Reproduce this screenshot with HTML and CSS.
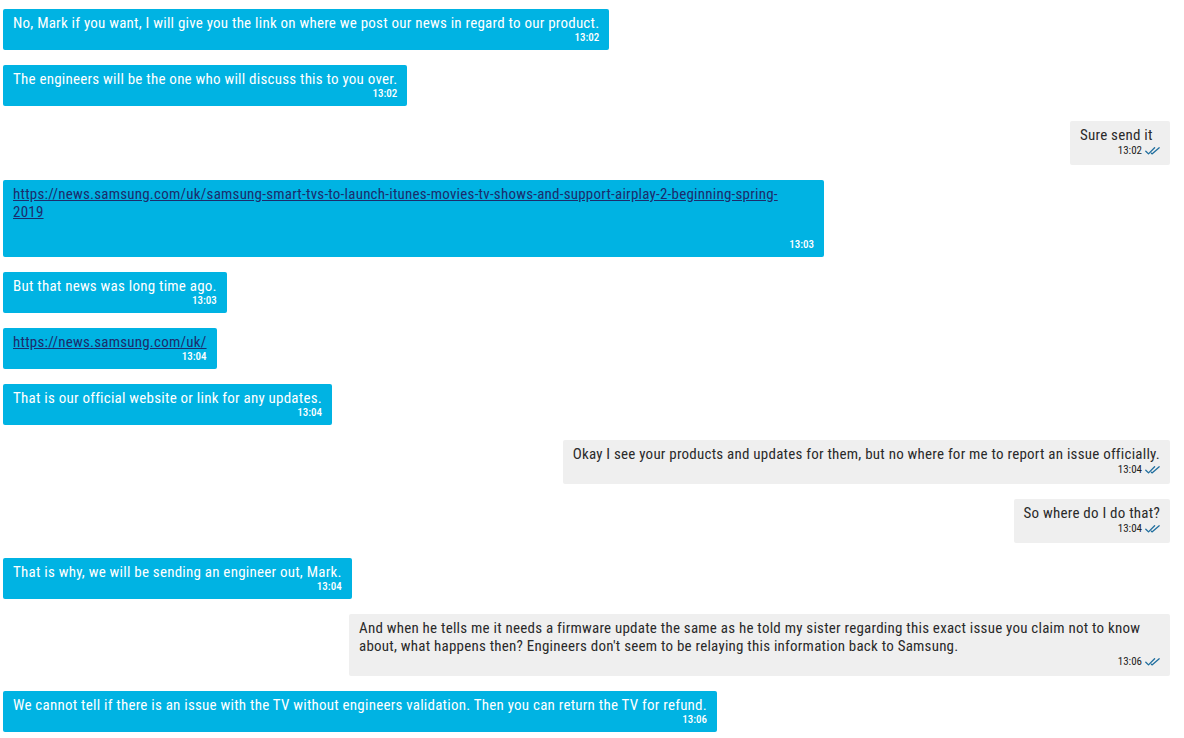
FILE: index.html
```html
<!DOCTYPE html>
<html lang="en">
<head>
<meta charset="utf-8">
<title>Chat transcript</title>
<link rel="stylesheet" href="styles.css">
</head>
<body>
<div class="chat">

  <div class="msg agent">
    <div class="bubble">
      <div class="text">No, Mark if you want, I will give you the link on where we post our news in regard to our product.</div>
      <div class="meta"><span class="time">13:02</span></div>
    </div>
  </div>

  <div class="msg agent">
    <div class="bubble">
      <div class="text">The engineers will be the one who will discuss this to you over.</div>
      <div class="meta"><span class="time">13:02</span></div>
    </div>
  </div>

  <div class="msg user">
    <div class="bubble">
      <div class="text">Sure send it</div>
      <div class="meta"><span class="time">13:02</span><svg class="ticks" viewBox="0 0 15 8" width="15" height="8"><path d="M0.8 4.2 L3.5 6.9 L9.6 0.8 M6.4 6.3 L7 6.9 L14.2 0.8"/></svg></div>
    </div>
  </div>

  <div class="msg agent">
    <div class="bubble full">
      <div class="text"><a class="link" href="#">https://news.samsung.com/uk/samsung-smart-tvs-to-launch-itunes-movies-tv-shows-and-support-airplay-2-beginning-spring-<br>2019</a><br>&nbsp;</div>
      <div class="meta"><span class="time">13:03</span></div>
    </div>
  </div>

  <div class="msg agent">
    <div class="bubble">
      <div class="text">But that news was long time ago.</div>
      <div class="meta"><span class="time">13:03</span></div>
    </div>
  </div>

  <div class="msg agent">
    <div class="bubble">
      <div class="text"><a class="link" href="#">https://news.samsung.com/uk/</a></div>
      <div class="meta"><span class="time">13:04</span></div>
    </div>
  </div>

  <div class="msg agent">
    <div class="bubble">
      <div class="text">That is our official website or link for any updates.</div>
      <div class="meta"><span class="time">13:04</span></div>
    </div>
  </div>

  <div class="msg user">
    <div class="bubble">
      <div class="text">Okay I see your products and updates for them, but no where for me to report an issue officially.</div>
      <div class="meta"><span class="time">13:04</span><svg class="ticks" viewBox="0 0 15 8" width="15" height="8"><path d="M0.8 4.2 L3.5 6.9 L9.6 0.8 M6.4 6.3 L7 6.9 L14.2 0.8"/></svg></div>
    </div>
  </div>

  <div class="msg user">
    <div class="bubble">
      <div class="text">So where do I do that?</div>
      <div class="meta"><span class="time">13:04</span><svg class="ticks" viewBox="0 0 15 8" width="15" height="8"><path d="M0.8 4.2 L3.5 6.9 L9.6 0.8 M6.4 6.3 L7 6.9 L14.2 0.8"/></svg></div>
    </div>
  </div>

  <div class="msg agent">
    <div class="bubble">
      <div class="text">That is why, we will be sending an engineer out, Mark.</div>
      <div class="meta"><span class="time">13:04</span></div>
    </div>
  </div>

  <div class="msg user">
    <div class="bubble full">
      <div class="text">And when he tells me it needs a firmware update the same as he told my sister regarding this exact issue you claim not to know<br>about, what happens then? Engineers don't seem to be relaying this information back to Samsung.</div>
      <div class="meta"><span class="time">13:06</span><svg class="ticks" viewBox="0 0 15 8" width="15" height="8"><path d="M0.8 4.2 L3.5 6.9 L9.6 0.8 M6.4 6.3 L7 6.9 L14.2 0.8"/></svg></div>
    </div>
  </div>

  <div class="msg agent">
    <div class="bubble">
      <div class="text">We cannot tell if there is an issue with the TV without engineers validation. Then you can return the TV for refund.</div>
      <div class="meta"><span class="time">13:06</span></div>
    </div>
  </div>

</div>
</body>
</html>
```
FILE: styles.css
```css
html, body {
  margin: 0;
  padding: 0;
  background: #ffffff;
}

.chat {
  display: flex;
  flex-direction: column;
  gap: 15px;
  padding: 9px 14px 0 3px;
  font-family: Roboto, "Liberation Sans", sans-serif;
}

.msg {
  display: flex;
}

.msg.agent {
  justify-content: flex-start;
}

.msg.user {
  justify-content: flex-end;
}

.bubble {
  box-sizing: border-box;
  min-width: 100px;
  max-width: 821px;
  padding: 5px 10px 6px 10px;
  border-radius: 2px;
}

.bubble.full {
  width: 821px;
}

.agent .bubble {
  background: #00b3e3;
  color: #ffffff;
}

.user .bubble {
  background: #efefef;
  color: #2a2a2a;
  padding-bottom: 7px;
}

.text {
  font-size: 15px;
  font-stretch: 75%;
  letter-spacing: 0.23px;
  line-height: 18px;
  white-space: nowrap;
}

.link {
  color: #1c2c6c;
  text-decoration: underline;
}

.meta {
  display: flex;
  justify-content: flex-end;
  align-items: center;
  gap: 3px;
  height: 12px;
  font-size: 11px;
  font-stretch: 75%;
  font-weight: 500;
  line-height: 12px;
}

.user .meta {
  height: 14px;
  line-height: 14px;
  color: #222222;
  font-weight: 400;
}

.ticks {
  display: block;
  fill: none;
  stroke: #1f6e9e;
  stroke-width: 1.3;
  stroke-linecap: round;
  stroke-linejoin: round;
}
```
